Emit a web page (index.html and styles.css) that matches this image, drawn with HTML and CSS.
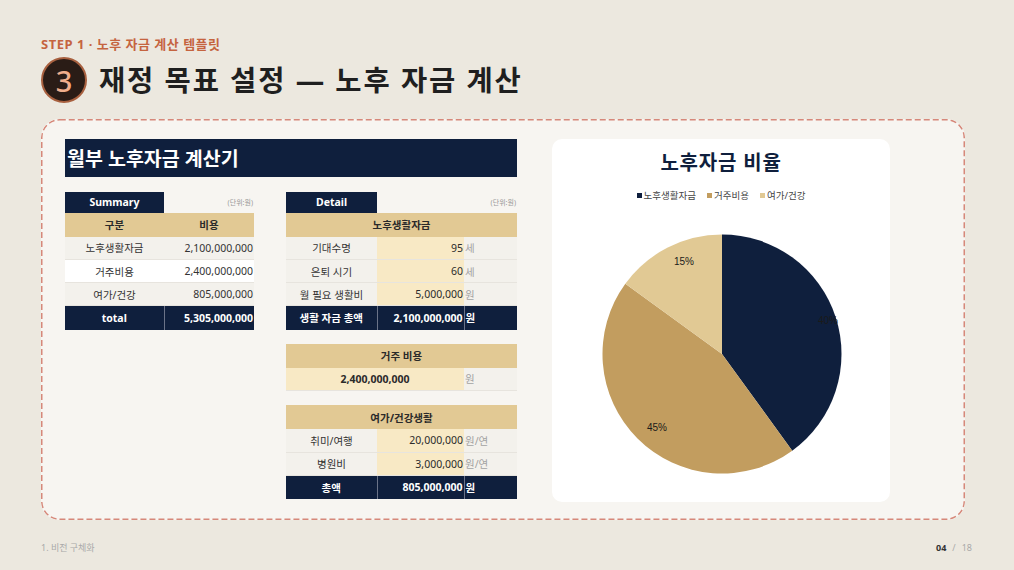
FILE: index.html
```html
<!DOCTYPE html>
<html lang="ko">
<head>
<meta charset="utf-8">
<title>재정 목표 설정</title>
<link rel="stylesheet" href="styles.css">
</head>
<body>
<div class="page">
  <p class="step">STEP 1 · 노후 자금 계산 템플릿</p>
  <div class="title-row">
    <div class="num">3</div>
    <h1 class="title">재정 목표 설정 — 노후 자금 계산</h1>
  </div>

  <div class="frame">
    <div class="left">
      <div class="banner">월부 노후자금 계산기</div>
      <div class="tables">
        <table class="tbl summary">
          <colgroup><col class="c-s1"><col class="c-s2"></colgroup>
          <tr class="r-top"><td class="navy b">Summary</td><td class="unit-note">(단위:원)</td></tr>
          <tr class="r-head"><td class="tan b">구분</td><td class="tan b">비용</td></tr>
          <tr class="r"><td class="grey ctr">노후생활자금</td><td class="grey num-r">2,100,000,000</td></tr>
          <tr class="r"><td class="white ctr">거주비용</td><td class="white num-r">2,400,000,000</td></tr>
          <tr class="r"><td class="grey ctr">여가/건강</td><td class="grey num-r">805,000,000</td></tr>
          <tr class="r-total"><td class="navy b">total</td><td class="navy b num-r">5,305,000,000</td></tr>
        </table>

        <div class="detail-col">
          <table class="tbl detail">
            <colgroup><col class="c-d1"><col class="c-d2"><col class="c-d3"></colgroup>
            <tr class="r-top"><td class="navy b">Detail</td><td class="unit-note" colspan="2">(단위:원)</td></tr>
            <tr class="r-head"><td class="tan b" colspan="3">노후생활자금</td></tr>
            <tr class="r"><td class="grey ctr">기대수명</td><td class="pale num-r">95</td><td class="grey unit">세</td></tr>
            <tr class="r"><td class="grey ctr">은퇴 시기</td><td class="pale num-r">60</td><td class="grey unit">세</td></tr>
            <tr class="r"><td class="grey ctr">월 필요 생활비</td><td class="pale num-r">5,000,000</td><td class="grey unit">원</td></tr>
            <tr class="r-total"><td class="navy b">생활 자금 총액</td><td class="navy b num-r">2,100,000,000</td><td class="navy b unit-w">원</td></tr>
          </table>

          <table class="tbl detail">
            <colgroup><col class="c-d1"><col class="c-d2"><col class="c-d3"></colgroup>
            <tr class="r-head"><td class="tan b" colspan="3">거주 비용</td></tr>
            <tr class="r"><td class="pale b" colspan="2">2,400,000,000</td><td class="grey unit">원</td></tr>
          </table>

          <table class="tbl detail">
            <colgroup><col class="c-d1"><col class="c-d2"><col class="c-d3"></colgroup>
            <tr class="r-head"><td class="tan b" colspan="3">여가/건강생활</td></tr>
            <tr class="r"><td class="grey ctr">취미/여행</td><td class="pale num-r">20,000,000</td><td class="grey unit">원/연</td></tr>
            <tr class="r"><td class="grey ctr">병원비</td><td class="pale num-r">3,000,000</td><td class="grey unit">원/연</td></tr>
            <tr class="r-total"><td class="navy b">총액</td><td class="navy b num-r">805,000,000</td><td class="navy b unit-w">원</td></tr>
          </table>
        </div>
      </div>
    </div>

    <div class="chart-card">
      <div class="chart-title">노후자금 비율</div>
      <div class="legend">
        <span class="lg"><i class="sw sw-navy"></i>노후생활자금</span>
        <span class="lg"><i class="sw sw-tan"></i>거주비용</span>
        <span class="lg"><i class="sw sw-light"></i>여가/건강</span>
      </div>
      <svg class="pie" width="240" height="241" viewBox="0 0 240 241">
        <path d="M120 120 L120 0.5 A119.5 119.5 0 0 1 190.24 216.68 Z" fill="#0f1f3d"/>
        <path d="M120 120 L190.24 216.68 A119.5 119.5 0 0 1 23.32 49.76 Z" fill="#c29d5f"/>
        <path d="M120 120 L23.32 49.76 A119.5 119.5 0 0 1 120 0.5 Z" fill="#e1c994"/>
        <text x="216" y="90" class="pl">40%</text>
        <text x="72" y="31" class="pl">15%</text>
        <text x="45" y="197" class="pl">45%</text>
      </svg>
    </div>
  </div>

  <div class="foot">
    <span>1. 비전 구체화</span>
    <span><b class="pg">04</b><span class="sep">/</span>18</span>
  </div>
</div>
</body>
</html>
```

FILE: styles.css
```css
* { box-sizing: border-box; }
html, body { margin: 0; }
body {
  width: 1014px;
  height: 570px;
  overflow: hidden;
  background: #ece8df;
  font-family: "Noto Sans", "Noto Sans CJK KR", sans-serif;
  color: #222;
}
.page {
  padding: 35px 0 0 41px;
  display: flex;
  flex-direction: column;
  height: 570px;
}
.step {
  margin: 0;
  font-size: 13px;
  font-weight: 700;
  line-height: 18px;
  color: #c5643f;
  letter-spacing: 0.5px;
}
.title-row {
  display: flex;
  align-items: center;
  gap: 12px;
  margin-top: 4px;
  height: 46px;
}
.num {
  width: 46px;
  height: 46px;
  border-radius: 50%;
  background: #2a1c16;
  border: 2px solid #a8603f;
  color: #f0ae8c;
  font-size: 29px;
  font-weight: 500;
  display: flex;
  align-items: center;
  justify-content: center;
  line-height: 1;
}
.title {
  margin: 0;
  font-size: 28.5px;
  font-weight: 700;
  color: #1f1f1f;
  letter-spacing: 1.9px;
  line-height: 46px;
}
.frame {
  margin-top: 16px;
  width: 924px;
  height: 401px;
  border-radius: 18px;
  background-color: #f7f5f1;
  background-image: url("data:image/svg+xml,%3Csvg xmlns='http://www.w3.org/2000/svg' width='924' height='401'%3E%3Crect x='0.75' y='0.75' width='922.5' height='399.5' rx='18' ry='18' fill='none' stroke='%23d6887a' stroke-width='1.5' stroke-dasharray='6 3'/%3E%3C/svg%3E");
  background-repeat: no-repeat;
  padding: 19.5px 0 0 24px;
  display: flex;
  gap: 35px;
}
.left { width: 452px; }
.banner {
  height: 38px;
  background: #0f1f3d;
  color: #fff;
  font-size: 19.5px;
  font-weight: 700;
  line-height: 40px;
  padding-left: 2px;
}
.tables {
  display: flex;
  gap: 32px;
  margin-top: 15px;
  align-items: flex-start;
}
.tbl {
  border-collapse: collapse;
  table-layout: fixed;
  font-size: 10.5px;
  color: #333;
}
.tbl td {
  padding: 0 2px;
  text-align: center;
  white-space: nowrap;
  overflow: hidden;
}
.summary { width: 189px; }
.c-s1 { width: 99px; }
.c-s2 { width: 90px; }
.detail { width: 231px; }
.c-d1 { width: 91px; }
.c-d2 { width: 87px; }
.c-d3 { width: 53px; }
.detail-col {
  display: flex;
  flex-direction: column;
  gap: 14px;
}
.r-top td { height: 21px; }
.r-head td { height: 24px; }
.r td { height: 23px; border-bottom: 1px solid #e7e4de; }
.r-total td { height: 24px; }
.navy { background: #0f1f3d; color: #fff; }
.r-total td + td { border-left: 1px solid #6b7388; }
.tan { background: #e2c994; color: #2a2a2a; }
.grey { background: #f3f1ec; }
.white { background: #fff; }
.pale { background: #f8e9c5; color: #2b2b2b; }
.b { font-weight: 700; }
.ctr { text-align: center; }
.tbl td.num-r { text-align: right; padding-right: 1px; }
.tbl td.unit { text-align: left; padding-left: 1px; color: #a3a3a3; }
.tbl td.unit-w { text-align: left; padding-left: 1px; }
.tbl td.unit-note {
  text-align: right;
  font-size: 7px;
  color: #9a9a9a;
  padding-right: 1px;
}
.chart-card {
  width: 338px;
  height: 363px;
  background: #fff;
  border-radius: 10px;
  display: flex;
  flex-direction: column;
  align-items: center;
}
.chart-title {
  margin-top: 9px;
  font-size: 20px;
  font-weight: 700;
  color: #0f1f3d;
  line-height: 30px;
  letter-spacing: 0.8px;
}
.legend {
  margin-top: 12px;
  display: flex;
  gap: 11px;
  font-size: 9.5px;
  color: #444;
  line-height: 12px;
}
.lg { display: flex; align-items: center; gap: 2px; }
.sw { display: inline-block; width: 5px; height: 5px; }
.sw-navy { background: #0f1f3d; }
.sw-tan { background: #c29d5f; }
.sw-light { background: #e1c994; }
.pie { margin-top: 32px; margin-left: 2px; }
.pl {
  font-family: "Liberation Sans", Arial, sans-serif;
  font-size: 10px;
  fill: #1a1a1a;
}
.foot {
  margin-top: 21px;
  width: 931px;
  display: flex;
  justify-content: space-between;
  font-size: 9px;
  color: #a9a9a9;
  line-height: 14px;
}
.pg { color: #333; font-weight: 700; }
.sep { margin: 0 6px; }
```
